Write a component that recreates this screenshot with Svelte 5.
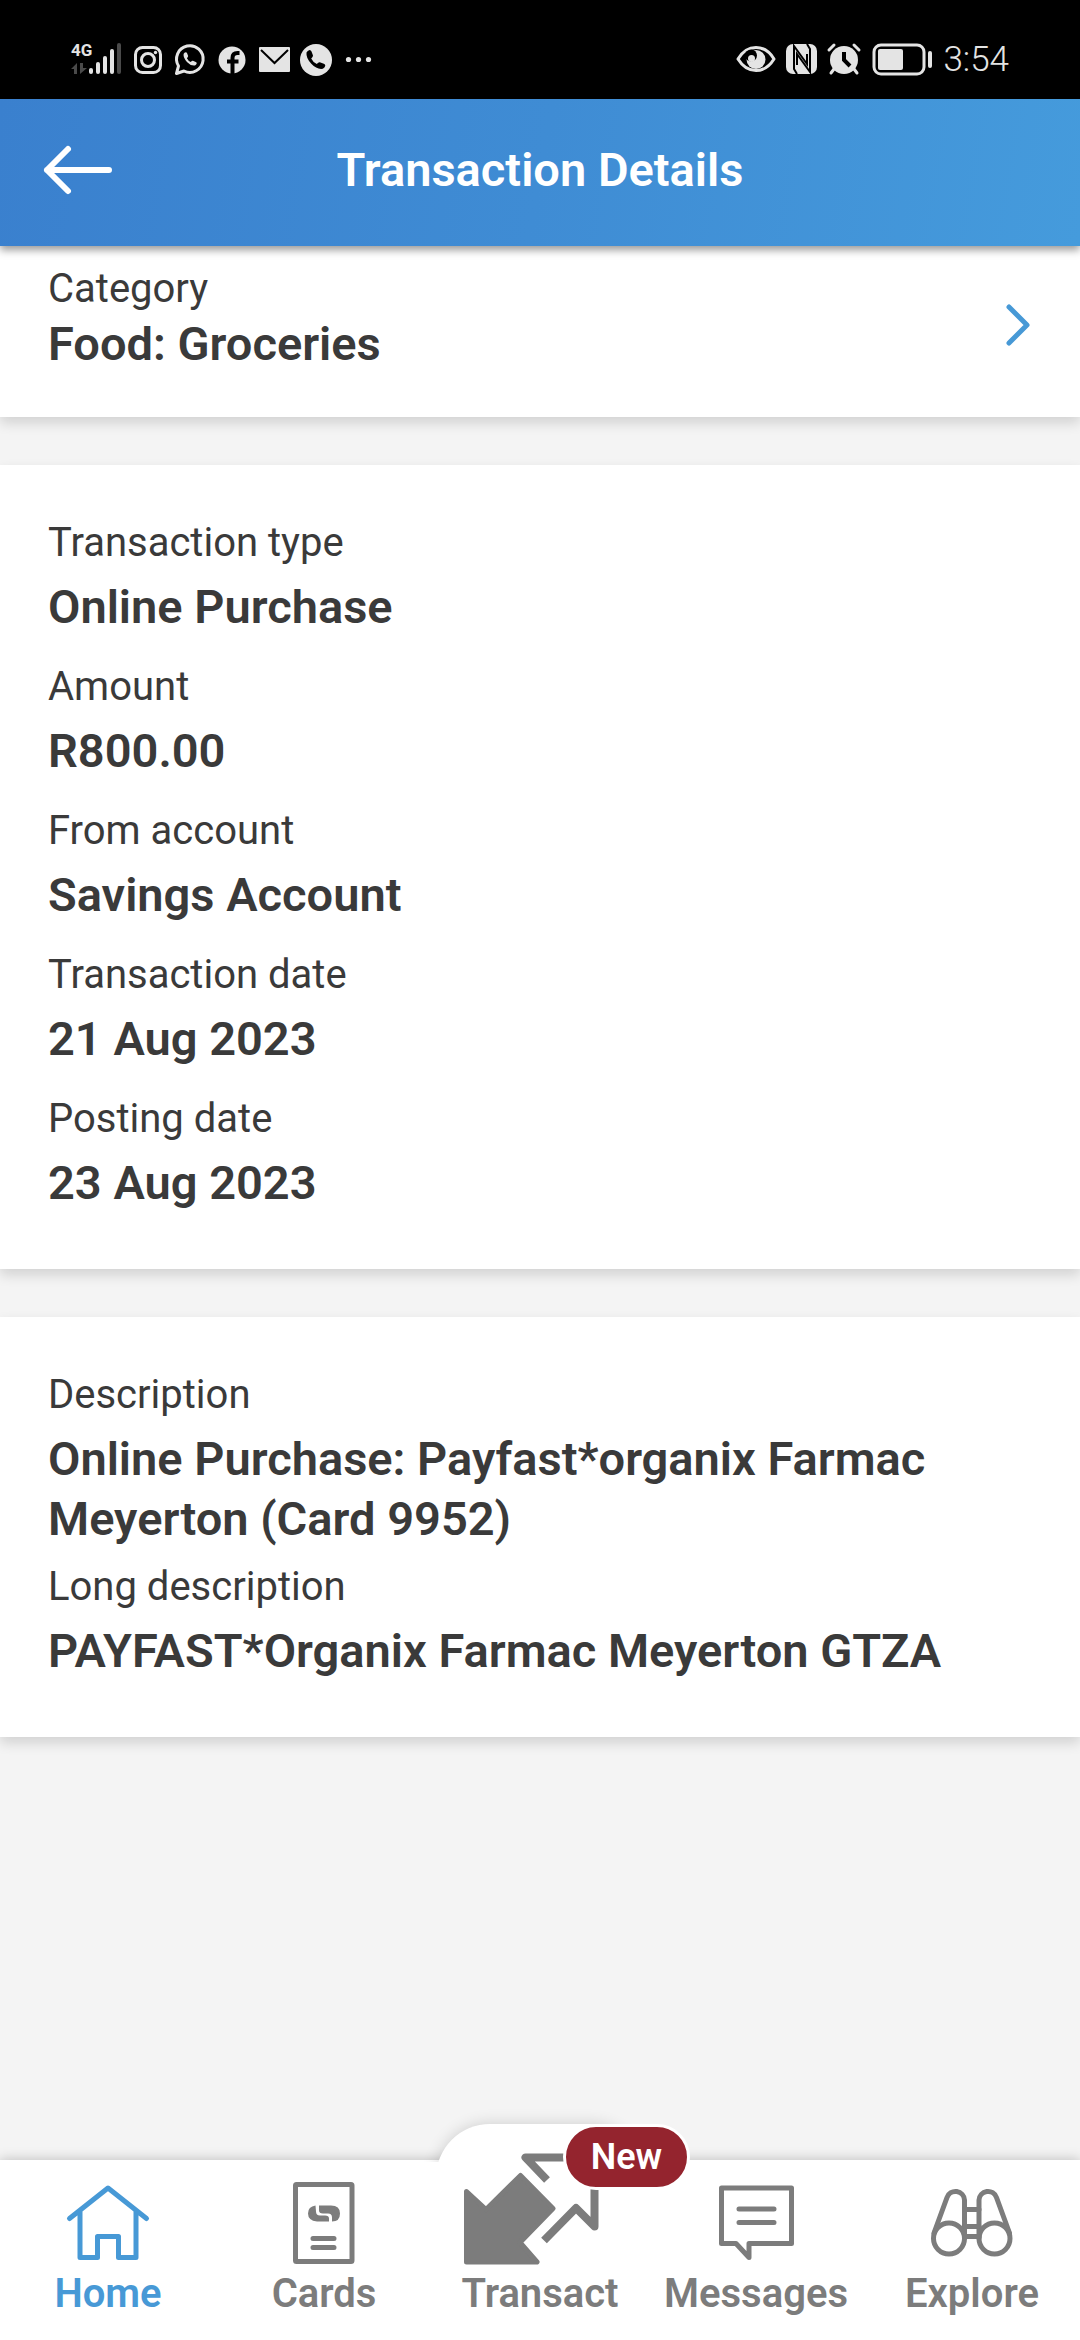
<script lang="ts">
	type Field = { label: string; value: string };

	const cards: Field[][] = [
		[
			{ label: 'Transaction type', value: 'Online Purchase' },
			{ label: 'Amount', value: 'R800.00' },
			{ label: 'From account', value: 'Savings Account' },
			{ label: 'Transaction date', value: '21 Aug 2023' },
			{ label: 'Posting date', value: '23 Aug 2023' }
		],
		[
			{
				label: 'Description',
				value: 'Online Purchase: Payfast*organix Farmac Meyerton (Card 9952)'
			},
			{ label: 'Long description', value: 'PAYFAST*Organix Farmac Meyerton GTZA' }
		]
	];

	const tabs = ['Home', 'Cards', 'Transact', 'Messages', 'Explore'];
	let active = $state('Home');

	// Shared by the WhatsApp and phone status icons
	const handset =
		'M3 5q1-2 3-2.5 1.5 0 2 1.5l1.5 4q0 1.5-1.8 3 1.8 3.800 5.600 5.600 1.500-2 3-1.800l4 1.500q1.500.7 1.500 2-.5 2.200-2.500 3-6 1-11.500-5T3 5z';
</script>

<div class="app">
	<div class="status">
		<div class="status-group">
			<svg width="56" height="40" viewBox="0 0 56 40" aria-hidden="true">
				<text class="network" x="0" y="16">4G</text>
				<path class="dim" d="M0 29l6-6v11H3v-5zM9 23h3v5h4l-7 6z" />
				<rect x="18" y="28" width="4" height="6" rx="2" />
				<rect x="25" y="22" width="4" height="12" rx="2" />
				<rect x="32" y="16" width="4" height="18" rx="2" />
				<rect x="39" y="9" width="4" height="25" rx="2" />
				<rect class="dim" x="46" y="3" width="4" height="31" rx="2" />
			</svg>
			<svg class="line" width="42" height="40" viewBox="0 0 42 40" aria-hidden="true">
				<rect x="8.5" y="7.5" width="25" height="25" rx="7" />
				<circle cx="21" cy="20" r="6.5" />
				<circle class="solid" cx="28.5" cy="12.5" r="1.7" />
			</svg>
			<svg class="line" width="42" height="40" viewBox="0 0 42 40" aria-hidden="true">
				<path d="M9.5 26A13.300 13.300 0 1 1 15 31l-7.500 2.500z" />
				<path class="solid" transform="translate(12.5 10.5) scale(.7)" d={handset} />
			</svg>
			<svg width="42" height="40" viewBox="0 0 42 40" aria-hidden="true">
				<circle cx="21" cy="20" r="13.5" />
				<path class="cut" d="M21.5 34V18q0-5 5-5h2M16 21.5h11.5" />
			</svg>
			<svg width="42" height="40" viewBox="0 0 42 40" aria-hidden="true">
				<rect x="6" y="7" width="31" height="25" rx="1" />
				<path class="cut thin" d="M8 10l13.5 13L35 10" />
			</svg>
			<svg width="42" height="40" viewBox="0 0 42 40" aria-hidden="true">
				<circle cx="21" cy="20" r="16" />
				<path class="ink" transform="translate(8.5 7.5)" d={handset} />
			</svg>
			<svg width="42" height="40" viewBox="0 0 42 40" aria-hidden="true">
				<circle cx="11.5" cy="19.5" r="2.6" />
				<circle cx="21.5" cy="19.5" r="2.6" />
				<circle cx="31.5" cy="19.5" r="2.6" />
			</svg>
		</div>
		<div class="status-group">
			<svg width="46" height="40" viewBox="0 0 46 40" aria-hidden="true">
				<path class="outline" d="M5 19Q12 7.5 23 7.5T41 19Q34 30.5 23 30.5T5 19z" />
				<circle cx="23" cy="19.5" r="9.5" />
				<circle class="ink" cx="18" cy="15.5" r="6" />
				<circle cx="18.5" cy="18.5" r="3.5" />
			</svg>
			<svg width="44" height="40" viewBox="0 0 44 40" aria-hidden="true">
				<rect x="7" y="4" width="31" height="30" rx="7" />
				<path class="cut thin" d="M18 34l-3-5V6l13 18V14M28 4l3 5v23L18 14v11" />
			</svg>
			<svg width="42" height="40" viewBox="0 0 42 40" aria-hidden="true">
				<circle cx="21" cy="20" r="14" />
				<path class="outline" d="M6 10l5-5M31 5l5 5M11 29l-3 4M31 29l3 4" />
				<path class="cut" d="M21 12v8l6 6" />
			</svg>
			<svg width="74" height="40" viewBox="0 0 74 40" aria-hidden="true">
				<rect class="outline" x="9" y="5" width="50" height="29" rx="7" />
				<rect x="13" y="9" width="25" height="21" rx="2" />
				<rect x="63" y="11" width="4" height="17" rx="2" />
			</svg>
			<time class="clock">3:54</time>
		</div>
	</div>

	<header class="header">
		<button type="button" class="back" aria-label="Back">
			<svg width="76" height="52" viewBox="0 0 76 52" aria-hidden="true">
				<path d="M69 26H7M28 5L7 26l21 21" />
			</svg>
		</button>
		<h1>Transaction Details</h1>
	</header>

	<main>
		<button type="button" class="card category">
			<span class="category-text">
				<span class="label">Category</span>
				<span class="value">Food: Groceries</span>
			</span>
			<svg width="28" height="42" viewBox="0 0 28 42" aria-hidden="true">
				<path d="M5 3l18 18L5 39" />
			</svg>
		</button>

		{#each cards as fields}
			<dl class="card details">
				{#each fields as field (field.label)}
					<div class="field">
						<dt class="label">{field.label}</dt>
						<dd class="value">{field.value}</dd>
					</div>
				{/each}
			</dl>
		{/each}
	</main>

	<nav class="nav">
		{#each tabs as tab (tab)}
			<button
				type="button"
				class="tab"
				class:active={active === tab}
				class:raised={tab === 'Transact'}
				aria-current={active === tab ? 'page' : undefined}
				onclick={() => (active = tab)}
			>
				<svg width="150" height="107" viewBox="0 13 150 107" aria-hidden="true">
					{#if tab === 'Home'}
						<path d="M36.5 71.5L75 41l38.5 30.5M47 64v46.5h17.5v-21h21v21H103V64" />
					{:else if tab === 'Cards'}
						<rect x="46.5" y="37.5" width="56.5" height="77" rx="1" />
						<path d="M64 91.5h21M64 100.5h21" />
						<path class="fill" d="M66.5 58.5q-7.5 1-7.5 8t9 8h12v-3q0-3-4-3h-5q-4 0-4-4z" />
						<path class="fill" d="M70 58.5h12q9 0 9 8t-8 8v-4q0-4-4-4h-5q-4 0-4-3z" />
					{:else if tab === 'Transact'}
						<path
							class="fill join"
							d="M1.5 44.5L21 62.5 55.5 28.5 88 61.5 55 95.5 72 115H1.5z"
						/>
						<path class="heavy" d="M82 33L60.5 10.5h69v69L111 61 79 93.5" />
					{:else if tab === 'Messages'}
						<path d="M40.5 41h70v55.5H68v14L55 96.5H40.5z" />
						<path d="M58 62h35M58 75.5h35" />
					{:else}
						<circle cx="52" cy="91.5" r="15.5" />
						<circle cx="97.5" cy="91.5" r="15.5" />
						<path d="M67.5 91V53a9 9 0 0 0-17.5-2.5L37 86M82 91V53a9 9 0 0 1 17.5-2.5l13 35.5" />
						<path d="M67.5 62.5H82M67.5 79.5H82M67.5 89.5H82" />
					{/if}
				</svg>
				{#if tab === 'Transact'}
					<span class="badge">New</span>
				{/if}
				<span class="tab-label">{tab}</span>
			</button>
		{/each}
	</nav>
</div>

<style>
	:global(body) {
		margin: 0;
		background: #f4f4f4;
	}

	.app {
		display: flex;
		flex-direction: column;
		min-height: 100vh;
		background: #f4f4f4;
		color: #3a3a3a;
		font-family: Roboto, 'Noto Sans', sans-serif;
	}

	button {
		border: 0;
		padding: 0;
		background: none;
		color: inherit;
		font: inherit;
		cursor: pointer;
	}

	svg {
		display: block;
		flex: none;
		overflow: visible;
	}

	/* System status bar */
	.status {
		display: flex;
		justify-content: space-between;
		height: 79px;
		padding: 20px 71px 0;
		align-items: center;
		background: #000;
		color: #e4e4e4;
	}

	.status-group {
		display: flex;
		align-items: center;
	}

	.status svg {
		fill: #e4e4e4;
	}

	.status .network {
		font-size: 17px;
		font-weight: 700;
	}

	.status .dim {
		fill: #4a4a4a;
	}

	.status .line,
	.status .outline {
		fill: none;
		stroke: #e4e4e4;
		stroke-width: 3;
		stroke-linecap: round;
		stroke-linejoin: round;
	}

	.status .solid {
		fill: #e4e4e4;
		stroke: none;
	}

	.status .cut {
		fill: none;
		stroke: #000;
		stroke-width: 4;
	}

	.status .thin {
		stroke-width: 2;
	}

	.status .ink {
		fill: #000;
	}

	.clock {
		padding-left: 4px;
		font-size: 35px;
		font-weight: 300;
		line-height: 40px;
	}

	/* Title bar */
	.header {
		position: relative;
		z-index: 1;
		display: grid;
		grid-template-columns: 1fr auto 1fr;
		align-items: center;
		box-sizing: border-box;
		height: 147px;
		padding: 0 40px 5px;
		background: linear-gradient(100deg, #3a80ce, #3f8cd4 50%, #459bdc);
		box-shadow: 0 4px 8px rgba(0, 0, 0, 0.4);
		color: #fff;
	}

	.back {
		justify-self: start;
	}

	.back path {
		fill: none;
		stroke: #fff;
		stroke-width: 6;
		stroke-linecap: round;
		stroke-linejoin: round;
	}

	h1 {
		margin: 0;
		font-size: 47px;
		font-weight: 600;
		line-height: 60px;
	}

	main {
		display: flex;
		flex: 1;
		flex-direction: column;
		gap: 48px;
	}

	.card {
		background: #fff;
		box-shadow: 0 6px 12px rgba(0, 0, 0, 0.14);
	}

	.label {
		padding-top: 2px;
		font-size: 40px;
		line-height: 60px;
	}

	.value {
		font-size: 47px;
		font-weight: 600;
		line-height: 60px;
	}

	.category {
		display: flex;
		align-items: flex-end;
		justify-content: space-between;
		padding: 14px 48px 45px;
		text-align: left;
	}

	.category-text {
		display: flex;
		flex-direction: column;
	}

	.category .label {
		line-height: 54px;
	}

	.category .value {
		line-height: 56px;
	}

	.category svg {
		margin-bottom: 26px;
	}

	.category path {
		fill: none;
		stroke: #4799d6;
		stroke-width: 5;
		stroke-linecap: round;
		stroke-linejoin: round;
	}

	.details {
		margin: 0;
		padding: 46px 48px 38px;
	}

	.field {
		min-height: 144px;
	}

	dd {
		margin: 0;
		padding: 4px 0 6px;
	}

	/* Bottom tabs */
	.nav {
		position: sticky;
		bottom: 0;
		display: grid;
		grid-template-columns: repeat(5, 1fr);
		background: #fff;
		box-shadow: 0 0 12px rgba(0, 0, 0, 0.24);
	}

	.tab {
		position: relative;
		display: flex;
		flex-direction: column;
		align-items: center;
		justify-content: flex-end;
		gap: 3px;
		padding-bottom: 22px;
		color: #7c7c7c;
	}

	.tab.active {
		color: #4799d6;
	}

	/* The raised tab bulges above the bar; its shadow is cut off at the bar's edge */
	.raised::before {
		position: absolute;
		top: -36px;
		right: 4px;
		left: 4px;
		height: 72px;
		border-radius: 54px 54px 0 0;
		background: #fff;
		box-shadow: 0 0 16px rgba(0, 0, 0, 0.16);
		clip-path: inset(-20px -20px 34px);
		content: '';
	}

	.tab svg {
		position: relative;
		fill: none;
		stroke: currentColor;
		stroke-width: 5;
		stroke-linecap: round;
		stroke-linejoin: round;
	}

	.tab .fill {
		fill: currentColor;
		stroke: none;
	}

	.tab .join {
		stroke: currentColor;
	}

	.tab .heavy {
		stroke-width: 8;
		stroke-linecap: butt;
	}

	.tab-label {
		font-size: 40px;
		font-weight: 600;
		line-height: 48px;
	}

	.badge {
		position: absolute;
		top: -36px;
		left: 131px;
		z-index: 1;
		box-sizing: border-box;
		width: 127px;
		border: 3px solid #fff;
		border-radius: 33px;
		background: #94242e;
		color: #fff;
		font-size: 36px;
		font-weight: 600;
		line-height: 60px;
		text-align: center;
	}
</style>
